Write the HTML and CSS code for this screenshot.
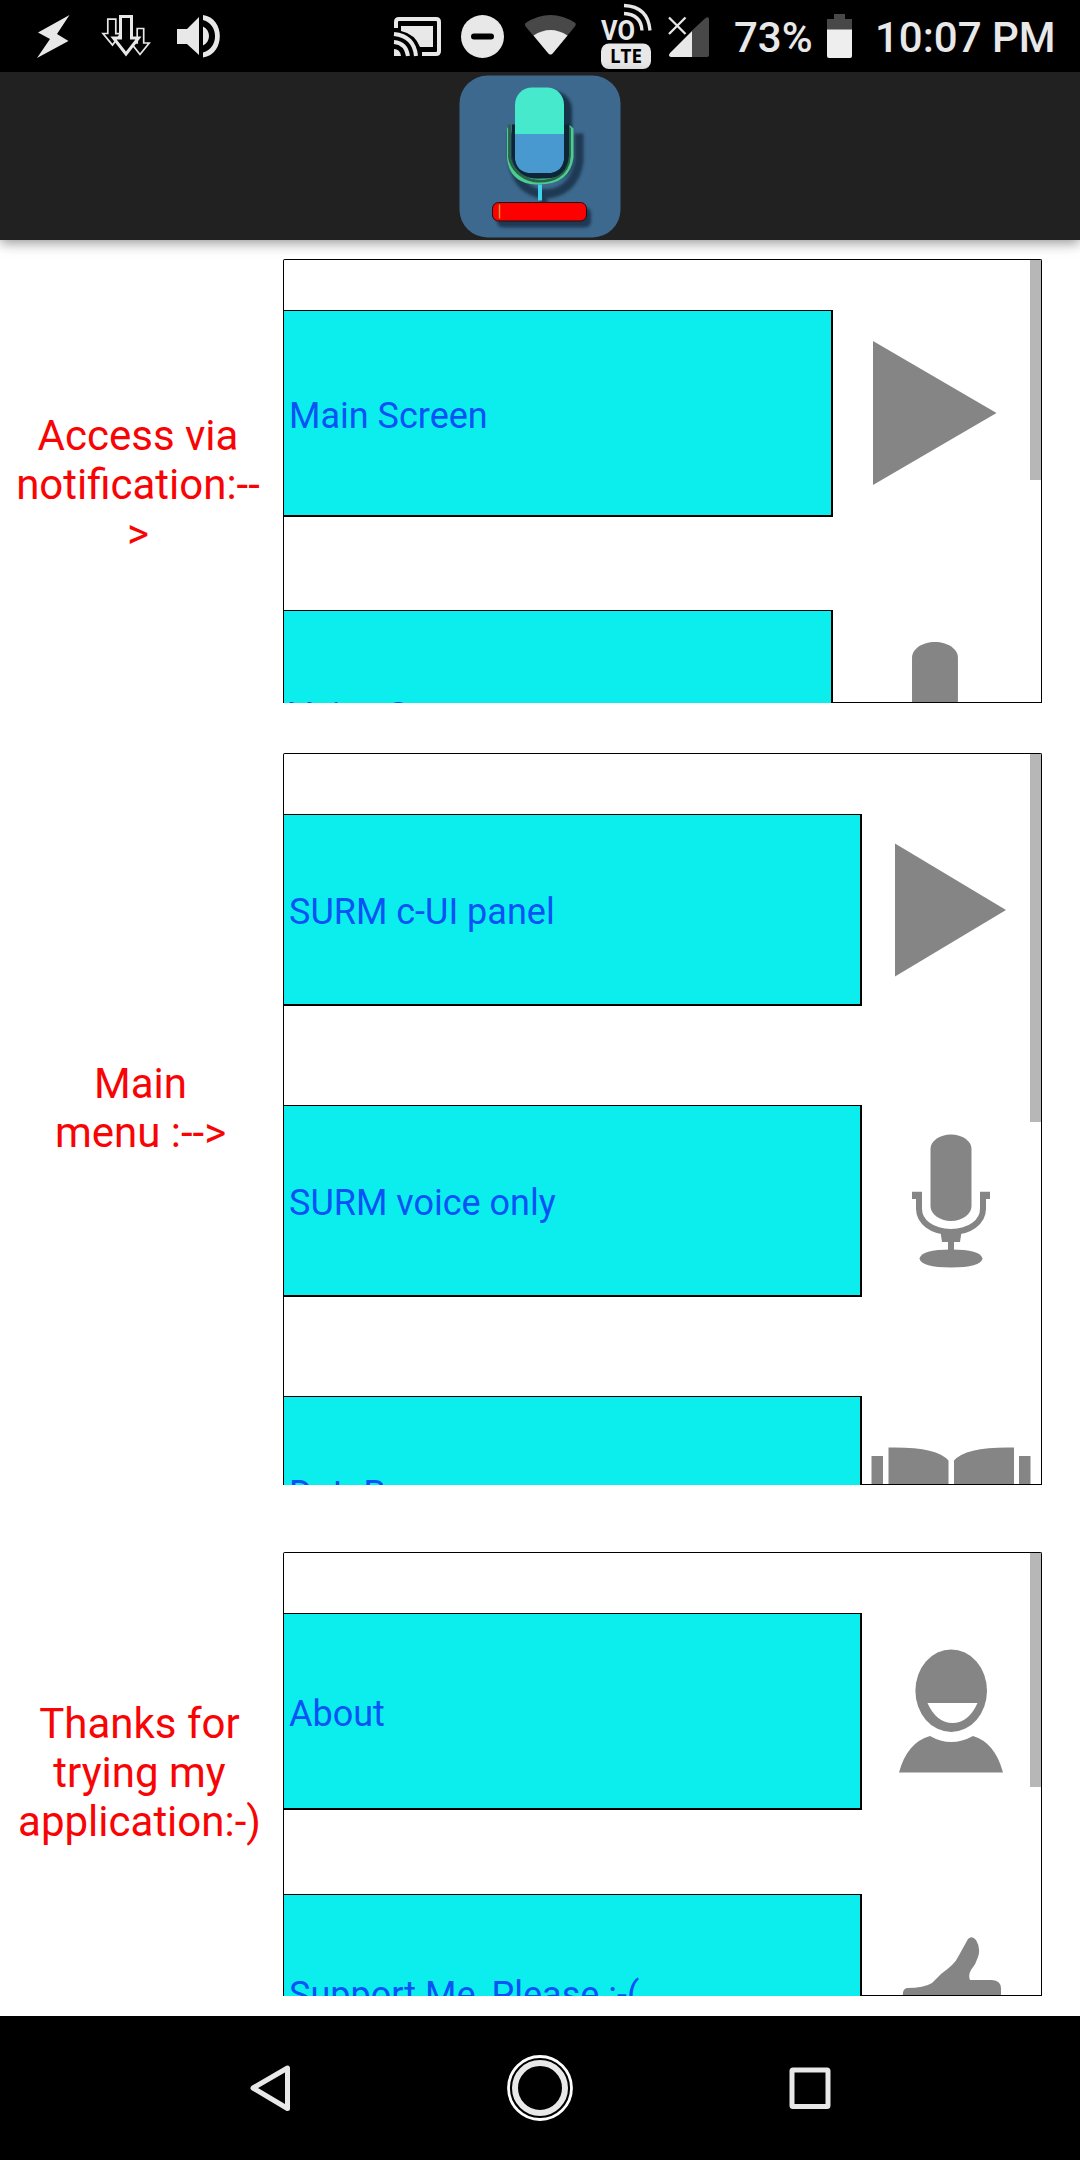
FILE: index.html
```html
<!DOCTYPE html>
<html lang="en">
<head>
<meta charset="utf-8">
<title>Voice recorder menu</title>
<link rel="stylesheet" href="styles.css">
</head>
<body>
<div class="screen">
  <div class="status">
    <svg width="60" height="72" viewBox="30 0 60 72" fill="#e8e8e8"><path d="M69.500 15 38 32.500 50 39 37 58 68.500 41 57 34z"/></svg>
    <svg width="70" height="72" viewBox="90 0 70 72" fill="#000" stroke="#e8e8e8" stroke-width="1.700">
      <path d="M107.800 19.200h8v14.500h5L112.500 45 103 33.500h4.800z"/>
      <path d="M137.200 28.500h6.500v14.500h5.500L140 54.500 131 43h6.200z"/>
      <path d="M120.500 16.500h11v21.500h7L126 54 113.500 38h7z" stroke-width="3"/>
    </svg>
    <svg width="70" height="72" viewBox="160 0 70 72" fill="#e8e8e8"><path d="M177 29h10l12-12v38L187 44h-10zM203 26.500c8 3.500 8 15.500 0 19zM203 15c22.500 3 22.500 39.500 0 42.500v-5c16-4 16-28.500 0-32.500z"/></svg>
    <span class="spacer"></span>
    <svg width="65" height="72" viewBox="385 0 65 72" fill="none" stroke="#e8e8e8" stroke-width="4">
      <path d="M396 28v-6q0-3 3-3h37q3 0 3 3v29q0 3-3 3h-14"/>
      <path d="M401 26h32v21h-13q-5-13-19-16z" fill="#e8e8e8" stroke="none"/>
      <path d="M394 42q12 1 14 14M394 34q20 2 22 22"/>
      <path d="M394 49q6 0 7 7h-7z" fill="#e8e8e8" stroke="none"/>
    </svg>
    <svg width="65" height="72" viewBox="450 0 65 72"><circle cx="482.500" cy="36.500" r="21.500" fill="#e8e8e8"/><path d="M474 36.500h17" stroke="#000" stroke-width="6" stroke-linecap="round"/></svg>
    <svg width="75" height="72" viewBox="515 0 75 72"><path d="M525.500 23Q550.500 7 575.500 23q1 2-1 4L553 53q-2.500 3-5 0L526 27q-2-2-.5-4z" fill="#484848"/><path d="M533.500 35.500q17-11 34 0L553 53q-2.500 3-5 0z" fill="#e8e8e8"/></svg>
    <svg width="70" height="72" viewBox="590 0 70 72">
      <g fill="none" stroke="#e8e8e8" stroke-width="3.300"><path d="M624 5.500q24 1 26 25M624 13.500q17 1 18 17"/></g>
      <text class="vo" x="601" y="40" textLength="34" lengthAdjust="spacingAndGlyphs">VO</text>
      <rect x="601" y="43.500" width="50" height="25.500" rx="8" fill="#e8e8e8"/>
      <text class="lte" x="610" y="63" textLength="32" lengthAdjust="spacingAndGlyphs">LTE</text>
    </svg>
    <svg width="60" height="72" viewBox="660 0 60 72"><path d="M692 30.500 705.500 18q3.500-2 3.500 1v36q0 2-2 2h-15z" fill="#484848"/><path d="M692 31v26h-21q-3.500-1-1-4z" fill="#e8e8e8"/><path d="m669 17.500 16.500 16.500m0-16.500L669 34" stroke="#e8e8e8" stroke-width="2.300"/></svg>
    <span class="percent">73%</span>
    <svg width="40" height="72" viewBox="820 0 40 72"><path d="M834 14h11v5h7v11h-25V19h7z" fill="#484848"/><path d="M827 29.500h25V56q0 2-2 2h-21q-2 0-2-2z" fill="#eee"/></svg>
    <span class="clock">10:07 PM</span>
  </div>

  <header class="appbar">
    <svg class="logo" width="162" height="163" viewBox="459 74.500 162 163">
      <defs><filter id="soft" x="-20%" y="-20%" width="140%" height="140%"><feGaussianBlur stdDeviation="1.600"/></filter></defs>
      <rect x="459.500" y="75" width="161" height="162" rx="28" fill="#3d698e"/>
      <g filter="url(#soft)" opacity=".8">
        <rect x="519" y="91" width="53" height="88" rx="18" fill="#102538"/>
        <path d="M513 132v27q2 27 25 34h13q24-5 28-32v-28" fill="none" stroke="#172f45" stroke-width="9"/>
        <path d="M544 190v18" stroke="#172f45" stroke-width="7"/>
        <rect x="497" y="207" width="94" height="20" rx="6" fill="#172f45"/>
      </g>
      <path d="M507 128v30Q510 183 536 184q34 1 37.500-27v-29l-4-3.500V157q-3 19-31 21-24-1-28-21v-33z" fill="#4bcd91"/>
      <path d="M509.500 124v33c2 12 12 20 23 23 20 3 36-5 37-25v-28" fill="none" stroke="#286247" stroke-width="2.800"/>
      <path d="M512 124h57v31q-2 22-22 23h-14q-18-3-21-23z" fill="#0d2536"/>
      <rect x="515" y="87" width="49" height="85.500" rx="17" fill="#47e9cd"/>
      <path d="M515 133.500h49V155.500q0 17-17 17h-15q-17 0-17-17z" fill="#4899d0"/>
      <path d="M540 184v16" stroke="#3dd3eb" stroke-width="4"/>
      <rect x="492.500" y="202" width="94" height="18.500" rx="6" fill="#f00" stroke="#230d10"/>
      <path d="M499.500 204v14" stroke="#d4a12c" stroke-width="1.400"/>
    </svg>
  </header>

  <main class="content">
    <section class="group group-notify">
      <h2 class="label">Access via<br>notification:--<br>&gt;</h2>
      <div class="panel">
        <div class="row"><div class="button">Main Screen</div>
          <svg class="icon" viewBox="0 0 207 207"><path d="M40 31 163.500 103 40 175z"/></svg></div>
        <div class="row"><div class="button">Voice Screen</div>
          <svg class="icon" viewBox="0 0 207 207"><use href="#mic" transform="translate(2.300 .2) scale(1.120 1.080)"/></svg></div>
        <span class="thumb"></span>
      </div>
    </section>

    <section class="group group-main">
      <h2 class="label">Main<br>menu :--&gt;</h2>
      <div class="panel">
        <div class="row"><div class="button">SURM c-UI panel</div>
          <svg class="icon" viewBox="0 0 179 192"><path d="M33 29.500 144 96 33 162.500z"/></svg></div>
        <div class="row"><div class="button">SURM voice only</div>
          <svg class="icon" viewBox="0 0 179 192"><g id="mic">
            <path d="M68.500 44c0-8 9-14.500 20.500-14.500S109.500 36 109.500 44v57c0 8-9 15-20.500 15s-20.500-7-20.500-15z"/>
            <path d="M50 89.800h7v14c0 13 13 23.200 32 23.200s32-10.200 32-23.200v-14h7" fill="none" stroke="#858585" stroke-width="6"/>
            <path d="M78.500 127h21l-1.500 10h-6v9h-6v-9h-6zM50 87h8v7h-8zM120 87h8v7h-8z"/>
            <path d="M57.500 153.500q2-9 31.500-9t31.500 9q-2 9-31.500 9t-31.500-9z"/>
          </g></svg></div>
        <div class="row"><div class="button">DataBase</div>
          <svg class="icon" viewBox="0 0 179 192"><path d="M9.500 60H21v132H9.500zM157 60h11.500v132H157zM26.500 51.500q48-1 60 13V192h-60zM152 51.500q-48-1-60 13V192h60z"/></svg></div>
        <span class="thumb"></span>
      </div>
    </section>

    <section class="group group-about">
      <h2 class="label">Thanks for<br>trying my<br>application:-)</h2>
      <div class="panel">
        <div class="row"><div class="button">About</div>
          <svg class="icon" viewBox="0 0 179 197"><ellipse cx="89.200" cy="77.700" rx="35.800" ry="41.300"/><path d="M65.500 90h50q-9 20-25 20t-25-20z" fill="#fff"/><path d="M37 159.500q8-30 31-36.500 21 12 43 0 22 6.500 30 36.500z"/></svg></div>
        <div class="row"><div class="button">Support Me, Please :-(</div>
          <svg class="icon" viewBox="0 0 179 197"><path d="M41 103q-1-8 4-9 17 0 25-5l9-9q14-10 17-17l10-18q4-4 8 1 5 8 2 17-2 7-7 13-3 5-1 10h22q10 1 9 10v50H41z"/></svg></div>
        <span class="thumb"></span>
      </div>
    </section>
  </main>

  <nav class="navbar">
    <svg width="80" height="80" viewBox="230 2048 80 80" fill="none" stroke="#e8e8e8" stroke-width="5" stroke-linejoin="round"><path d="M253 2088 287.500 2068v40.500z"/></svg>
    <svg width="80" height="80" viewBox="500 2048 80 80" fill="none"><circle cx="540" cy="2088" r="31.500" stroke="#fff" stroke-width="2.800"/><circle cx="540" cy="2088" r="25" stroke="#e8e8e8" stroke-width="6"/></svg>
    <svg width="80" height="80" viewBox="770 2048 80 80" fill="none" stroke="#e8e8e8" stroke-width="5"><rect x="792" y="2070" width="36" height="36.500" rx="1"/></svg>
  </nav>
</div>
</body>
</html>
```

FILE: styles.css
```css
* { box-sizing: border-box; }

body {
  margin: 0;
  background: #fff;
  font-family: Roboto, "Liberation Sans", sans-serif;
}

.screen {
  width: 1080px;
  height: 2160px;
  display: flex;
  flex-direction: column;
  overflow: hidden;
}

svg { display: block; flex: none; }

.status {
  height: 72px;
  flex: none;
  display: flex;
  align-items: center;
  padding-left: 30px;
  background: #000;
  color: #e8e8e8;
  font-size: 42px;
  font-weight: 500;
  line-height: 72px;
  white-space: nowrap;
}
.spacer { flex: 1; }
.percent { width: 100px; padding-left: 14px; padding-top: 4px; }
.clock { width: 220px; padding-left: 15px; padding-top: 4px; }
.vo { font: 700 28px Roboto, sans-serif; fill: #e8e8e8; }
.lte { font: 700 19.500px "Open Sans", sans-serif; fill: #000; }

.appbar {
  height: 168px;
  flex: none;
  display: flex;
  justify-content: center;
  align-items: center;
  background: #212121;
  box-shadow: 0 3px 12px rgba(0, 0, 0, .42);
}

.content {
  flex: 1;
  min-height: 0;
  display: flex;
  flex-direction: column;
  padding-top: 19px;
}

.group {
  flex: none;
  display: flex;
  align-items: center;
}
.group-notify { height: 444px; margin-bottom: 50px; --button: 549px; --tall: 207px; --space: 93px; --top: 50px; --thumb: 220px; }
.group-main { height: 732px; margin-bottom: 67px; --button: 578px; --tall: 192px; --space: 99px; --top: 60px; --thumb: 368px; }
.group-about { height: 444px; --button: 578px; --tall: 197px; --space: 84px; --top: 60px; --thumb: 234px; }

.label {
  width: 283px;
  margin: 0;
  padding-right: 7px;
  padding-top: 7px;
  color: #f80404;
  font-size: 42px;
  font-weight: 400;
  line-height: 49px;
  text-align: center;
  white-space: nowrap;
}
.group-main .label { padding-right: 2px; padding-top: 0; padding-bottom: 23px; }
.group-about .label { padding-right: 4px; padding-top: 0; padding-bottom: 3px; }

.panel {
  position: relative;
  width: 759px;
  height: 100%;
  display: flex;
  flex-direction: column;
  gap: var(--space);
  padding-top: var(--top);
  border: 1px solid #000;
  border-bottom: 0;
  border-radius: 2px 2px 0 0;
  overflow: hidden;
}
.panel::after {
  content: "";
  position: absolute;
  right: 0;
  bottom: 0;
  left: var(--button);
  height: 1px;
  background: #000;
}

.row {
  flex: none;
  height: var(--tall);
  display: flex;
}
.button {
  width: var(--button);
  display: flex;
  align-items: center;
  padding-left: 5px;
  padding-top: 5px;
  background: #0ceeee;
  border: solid #000;
  border-width: 1px 2px 2px 0;
  color: #0753f5;
  font-size: 36px;
  white-space: nowrap;
}
.icon {
  height: var(--tall);
  fill: #858585;
}

.thumb {
  position: absolute;
  top: 0;
  right: 0;
  width: 11px;
  height: var(--thumb);
  background: #b7b7b7;
}

.navbar {
  height: 144px;
  flex: none;
  display: grid;
  grid-template-columns: repeat(3, 270px);
  justify-content: center;
  justify-items: center;
  align-items: center;
  background: #000;
}
```
